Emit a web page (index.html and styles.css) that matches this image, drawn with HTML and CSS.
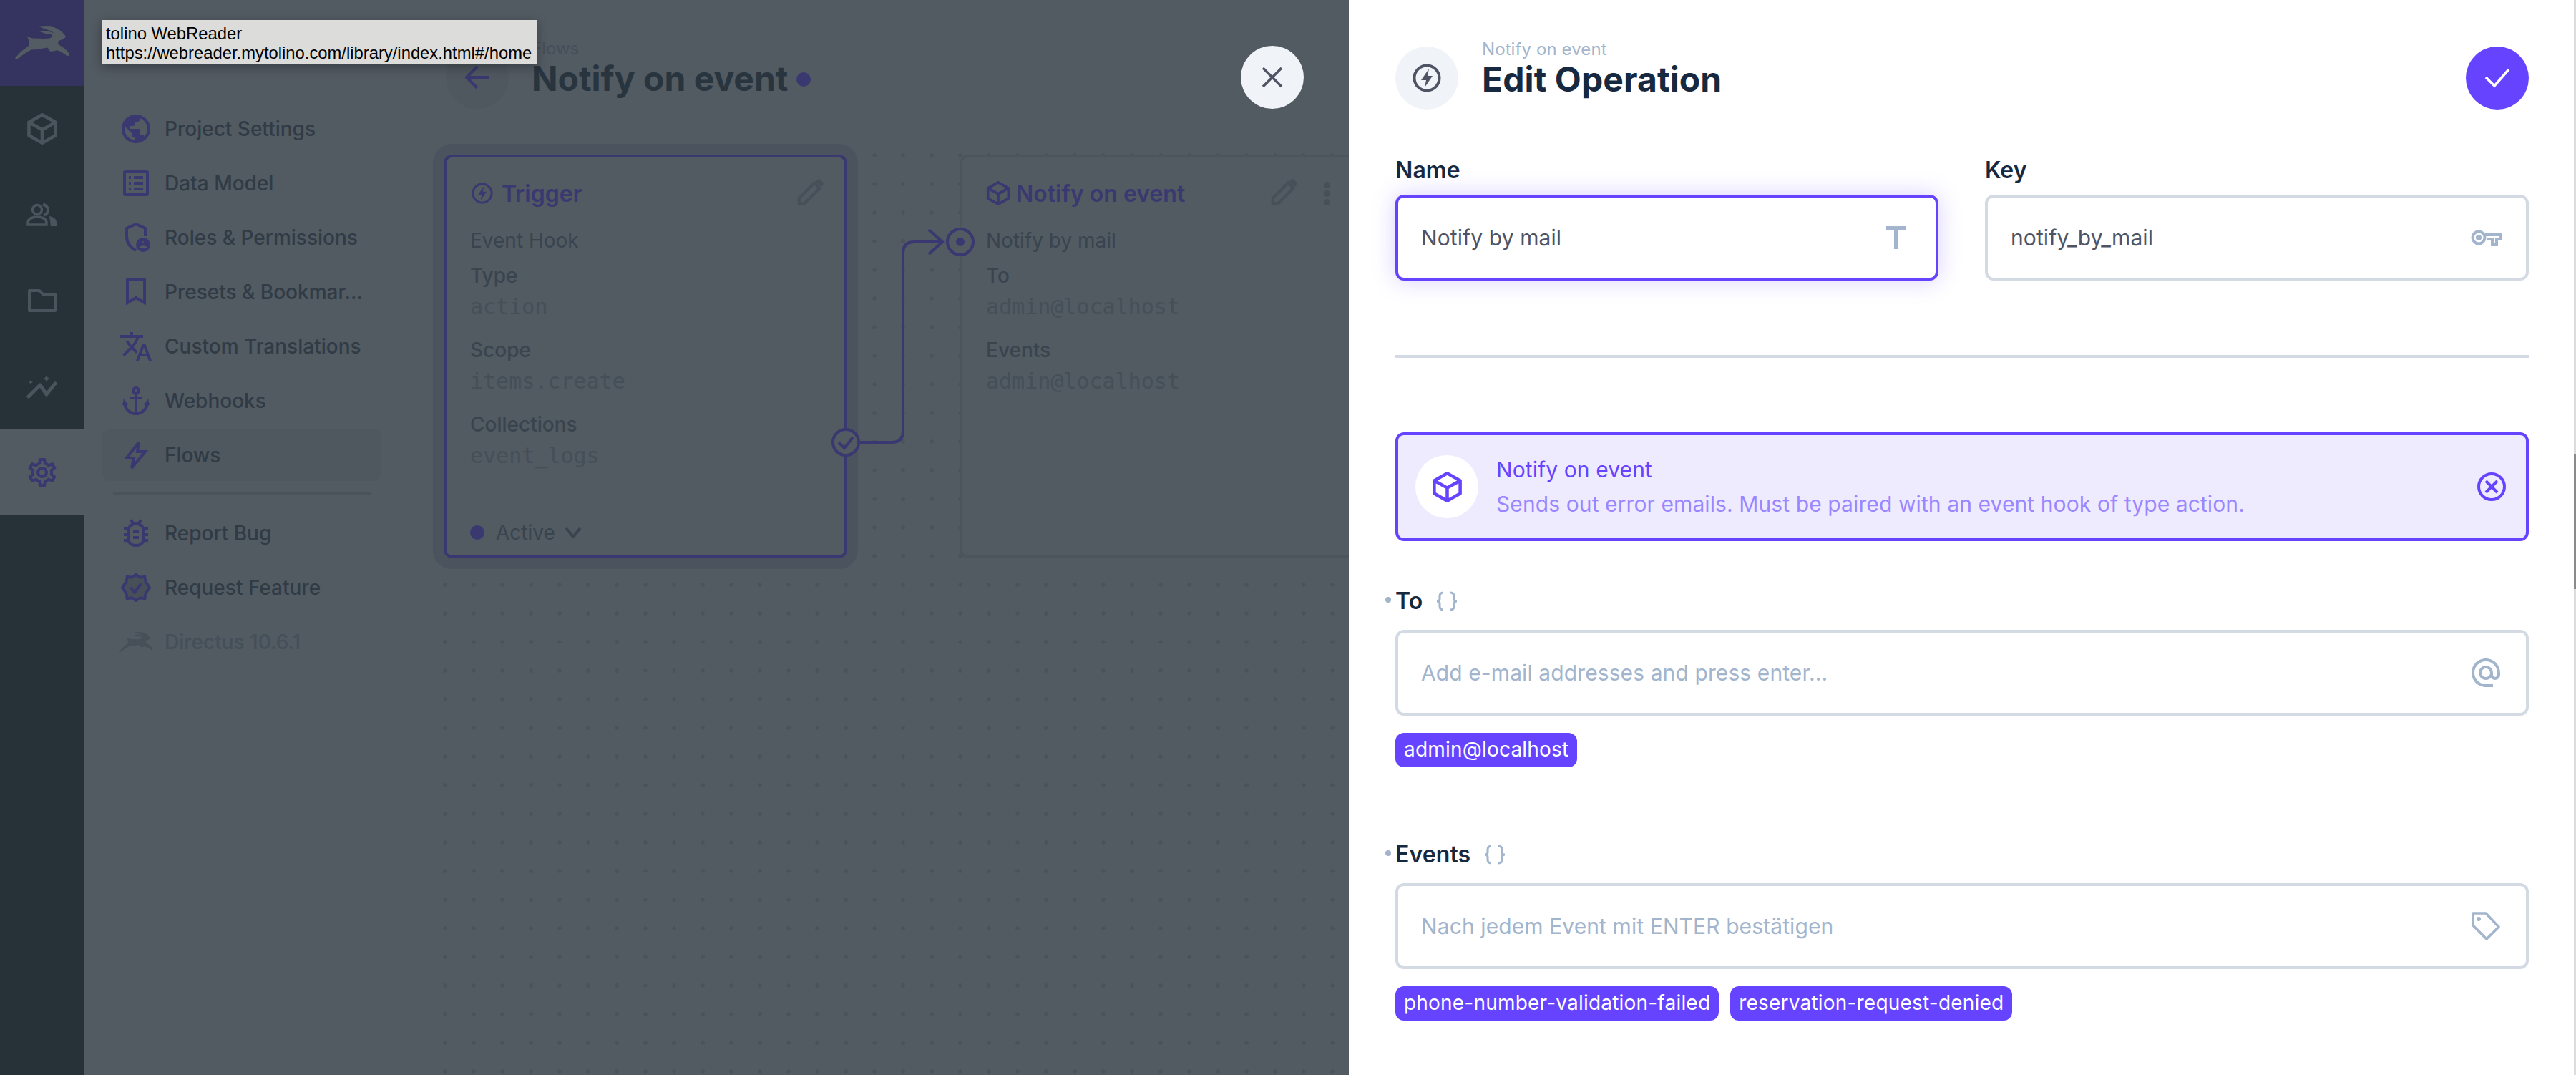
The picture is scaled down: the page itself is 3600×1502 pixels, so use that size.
FILE: index.html
```html
<!DOCTYPE html>
<html lang="en">
<head>
  <meta charset="UTF-8">
  <title>Directus - Notify on event</title>
  <link rel="stylesheet" href="styles.css">
</head>
<body>
  <svg class="sprites" width="0" height="0">
    <symbol id="rabbit" viewBox="50 45 245 150">
      <path d="M55 185Q75 160 92 148Q112 138 116 125Q118 112 105 90Q125 100 140 100Q180 102 205 100Q215 95 217 85Q190 82 160 70Q170 64 195 68Q212 72 222 78L212 68Q185 60 160 50Q200 45 225 52Q255 62 275 90Q275 102 245 110Q238 118 245 128Q275 145 290 165Q292 178 280 176Q255 155 235 152Q215 160 205 155Q200 145 195 140Q160 148 125 150Q95 165 62 192Q52 192 55 185Z"/>
    </symbol>
    <symbol id="bolt-circle" viewBox="0 0 40 40">
      <circle cx="20" cy="20" r="17.5" fill="none" stroke="currentColor" stroke-width="4"/>
      <path d="M23 7 12 23h7l-2 10 11-16h-7z" fill="currentColor"/>
    </symbol>
    <symbol id="cube" viewBox="2 1 36 38">
      <path d="M20 3 36 12v16L20 37 4 28V12zM4 12l16 9 16-9M20 21v16" fill="none" stroke="currentColor" stroke-width="4" stroke-linejoin="round"/>
    </symbol>
    <symbol id="pencil" viewBox="0 0 40 40">
      <path d="M3 37v-8L26 6l8 8-23 23z" fill="none" stroke="currentColor" stroke-width="4.500"/>
      <path d="M28 4l3-3c1-1 3-1 4 0l4 4c1 1 1 3 0 4l-3 3z" fill="currentColor"/>
    </symbol>
    <symbol id="braces" viewBox="0 0 32 28">
      <path d="M11 2C7 2 6 4 6 7v4c0 2-1 3-4 3 3 0 4 1 4 3v4c0 3 1 5 5 5M21 2c4 0 5 2 5 5v4c0 2 1 3 4 3-3 0-4 1-4 3v4c0 3-1 5-5 5" fill="none" stroke="currentColor" stroke-width="3"/>
    </symbol>
  </svg>

  <div class="app">
    <aside class="rail">
      <div class="rail-logo">
        <svg class="rabbit"><use href="#rabbit"/></svg>
      </div>
      <div class="rail-item">
        <svg class="rail-cube"><use href="#cube"/></svg>
      </div>
      <div class="rail-item">
        <svg class="rail-icon" viewBox="0 0 44 32" fill="none" stroke="currentColor" stroke-width="3.500">
          <circle cx="15" cy="9" r="6.500"/>
          <path d="M2 30v-3c0-5 6-8 13-8s13 3 13 8v3z"/>
          <path d="M23 1.500c4 1 7 4 7 8s-3 6.500-6 7.500" stroke-width="4"/>
          <path d="M32 18c6 1 10 4 10 9v5h-8" fill="currentColor" stroke="none"/>
        </svg>
      </div>
      <div class="rail-item">
        <svg class="rail-icon" viewBox="0 0 44 32" fill="none" stroke="currentColor" stroke-width="4">
          <path d="M4 2h14l5 5h17v23H4z" stroke-linejoin="round"/>
        </svg>
      </div>
      <div class="rail-item">
        <svg class="rail-icon tall" viewBox="0 0 44 33" fill="none" stroke="currentColor" stroke-width="5" stroke-linecap="round" stroke-linejoin="round">
          <path d="M3 30 19 14l9 13 12-15"/>
          <path d="M28 0l1.500 3.500L33 5l-3.500 1.500L28 10l-1.500-3.500L23 5l3.500-1.500zM6 7l1 2 2 1-2 1-1 2-1-2-2-1 2-1z" fill="currentColor" stroke="none"/>
        </svg>
      </div>
      <div class="rail-item active">
        <svg class="rail-gear" viewBox="2 2 20 20"><path fill="currentColor" d="M19.43 12.98c.04-.32.07-.64.07-.98 0-.34-.03-.66-.07-.98l2.11-1.650c.19-.15.24-.42.12-.64l-2-3.460c-.12-.22-.39-.3-.61-.22l-2.490 1c-.52-.4-1.080-.73-1.690-.98l-.38-2.650C14.460 2.180 14.250 2 14 2h-4c-.25 0-.46.18-.49.42l-.38 2.650c-.61.25-1.170.59-1.690.98l-2.490-1c-.23-.09-.49 0-.61.22l-2 3.460c-.13.22-.07.49.12.64l2.110 1.650c-.04.32-.07.65-.07.98 0 .33.03.66.07.98l-2.110 1.650c-.19.15-.24.42-.12.64l2 3.460c.12.22.39.3.61.22l2.490-1c.52.4 1.080.73 1.690.98l.38 2.650c.03.24.24.42.49.42h4c.25 0 .46-.18.49-.42l.38-2.650c.61-.25 1.170-.59 1.690-.98l2.490 1c.23.09.49 0 .61-.22l2-3.460c.12-.22.07-.49-.12-.64l-2.110-1.650zm-1.980-1.710c.04.31.05.52.05.73 0 .21-.02.43-.05.73l-.14 1.130.89.7 1.080.84-.7 1.210-1.270-.51-1.040-.42-.9.68c-.43.32-.84.56-1.250.73l-1.060.43-.16 1.130-.2 1.350h-1.400l-.19-1.350-.16-1.130-1.060-.43c-.43-.18-.83-.41-1.230-.71l-.91-.7-1.060.43-1.270.51-.7-1.210 1.080-.84.89-.7-.14-1.130c-.03-.31-.05-.54-.05-.74s.02-.43.05-.73l.14-1.130-.89-.7-1.080-.84.7-1.210 1.270.51 1.040.42.9-.68c.43-.32.84-.56 1.250-.73l1.060-.43.16-1.130.2-1.350h1.390l.19 1.350.16 1.130 1.060.43c.43.18.83.41 1.230.71l.91.7 1.060-.43 1.270-.51.7 1.210-1.070.85-.89.7.14 1.130zM12 8c-2.210 0-4 1.790-4 4s1.790 4 4 4 4-1.790 4-4-1.790-4-4-4zm0 6c-1.100 0-2-.9-2-2s.9-2 2-2 2 .9 2 2-.9 2-2 2z"/></svg>
      </div>
    </aside>

    <nav class="side">
      <a class="side-item">
        <svg class="side-icon" viewBox="2 2 20 20"><path fill="currentColor" d="M12 2C6.480 2 2 6.480 2 12s4.480 10 10 10 10-4.480 10-10S17.520 2 12 2zm-1 17.930c-3.950-.49-7-3.850-7-7.930 0-.62.08-1.210.21-1.790L9 15v1c0 1.100.9 2 2 2v1.930zm6.900-2.540c-.26-.81-1-1.390-1.900-1.390h-1v-3c0-.55-.45-1-1-1H8v-2h2c.55 0 1-.45 1-1V7h2c1.100 0 2-.9 2-2v-.41c2.930 1.190 5 4.060 5 7.410 0 2.080-.8 3.970-2.100 5.390z"/></svg>
        <span>Project Settings</span>
      </a>
      <a class="side-item">
        <svg class="side-icon" viewBox="0 0 40 40" fill="none" stroke="currentColor" stroke-width="4"><rect x="4" y="4" width="32" height="32" rx="1"/><path d="M17 12h13M17 20h13M17 28h13M10 12h3M10 20h3M10 28h3"/></svg>
        <span>Data Model</span>
      </a>
      <a class="side-item">
        <svg class="side-icon" viewBox="0 0 40 40" fill="none" stroke="currentColor" stroke-width="4"><path d="M20 1 7 7v11c0 9 5 16 13 20M33 18V7L20 1"/><circle cx="30" cy="30" r="10" fill="currentColor" stroke="none"/><circle cx="30" cy="26" r="3" fill="#525a62"/><path d="M24 35c1-5 11-5 12 0z" fill="#525a62" stroke="none"/></svg>
        <span>Roles &amp; Permissions</span>
      </a>
      <a class="side-item">
        <svg class="side-icon" viewBox="0 0 40 40" fill="none" stroke="currentColor" stroke-width="4"><path d="M8 3h24v32l-12-7-12 7z"/></svg>
        <span>Presets &amp; Bookmar...</span>
      </a>
      <a class="side-item">
        <svg class="side-icon wide" viewBox="1 2 22 20"><path fill="currentColor" d="M12.870 15.070l-2.540-2.510.03-.03c1.740-1.940 2.980-4.170 3.710-6.530H17V4h-7V2H8v2H1v1.990h11.170C11.500 7.920 10.440 9.750 9 11.350 8.070 10.320 7.300 9.190 6.690 8h-2c.73 1.630 1.730 3.170 2.980 4.560l-5.090 5.020L4 19l5-5 3.110 3.110.76-2.040zM18.500 10h-2L12 22h2l1.120-3h4.750L21 22h2l-4.500-12zm-2.620 7l1.620-4.330L19.120 17h-3.240z"/></svg>
        <span>Custom Translations</span>
      </a>
      <a class="side-item">
        <svg class="side-icon" viewBox="0 0 40 40" fill="none" stroke="currentColor" stroke-width="4"><circle cx="20" cy="6" r="4"/><path d="M20 10v28M12 16h16M4 21c0 10 7 17 16 17s16-7 16-17"/><path d="M3 17l6 9H1zM37 17l-6 9h8z" fill="currentColor" stroke="none"/></svg>
        <span>Webhooks</span>
      </a>
      <a class="side-item active">
        <svg class="side-icon" viewBox="0 0 40 40" fill="none" stroke="currentColor" stroke-width="4"><path d="M24 2 7 24h10l-3 14 19-23H22z" stroke-linejoin="miter"/></svg>
        <span>Flows</span>
      </a>
      <div class="side-divider"></div>
      <a class="side-item">
        <svg class="side-icon" viewBox="0 0 40 40" fill="none" stroke="currentColor" stroke-width="4"><rect x="9" y="7" width="22" height="30" rx="10"/><path d="M13 1l3 6M27 1l-3 6M3 14h6M3 22h6M3 30h6M31 14h6M31 22h6M31 30h6M16 18h8M16 26h8"/></svg>
        <span>Report Bug</span>
      </a>
      <a class="side-item">
        <svg class="side-icon wide" viewBox="0 0 44 42" fill="none" stroke="currentColor" stroke-width="4"><path d="M22 2l6 4 7-1 1 7 6 9-6 9-1 7-7-1-6 4-6-4-7 1-1-7-6-9 6-9 1-7 7 1z"/><path d="M14 21l6 7 10-13"/></svg>
        <span>Request Feature</span>
      </a>
      <a class="side-item version">
        <svg class="side-icon wide"><use href="#rabbit"/></svg>
        <span>Directus 10.6.1</span>
      </a>
    </nav>

    <main class="main">
      <header class="main-head">
        <div class="round-btn back">
          <svg viewBox="0 0 40 40" fill="none" stroke="currentColor" stroke-width="4"><path d="M36 20H6M20 5 5 20l15 15"/></svg>
        </div>
        <div class="titles">
          <div class="crumb">Flows</div>
          <h1>Notify on event <i class="dirty"></i></h1>
        </div>
      </header>

      <section class="canvas">
        <div class="node node-trigger">
          <div class="node-head">
            <svg class="node-icon"><use href="#bolt-circle"/></svg>
            <b>Trigger</b>
            <svg class="node-edit"><use href="#pencil"/></svg>
          </div>
          <div class="node-sub">Event Hook</div>
          <dl>
            <dt>Type</dt><dd>action</dd>
            <dt>Scope</dt><dd>items.create</dd>
            <dt>Collections</dt><dd>event_logs</dd>
          </dl>
          <div class="node-foot">
            <i class="dirty"></i><span>Active</span>
            <svg viewBox="0 0 24 16" fill="none" stroke="currentColor" stroke-width="4"><path d="M2 2l10 12L22 2"/></svg>
          </div>
        </div>

        <div class="node node-op">
          <div class="node-head">
            <svg class="node-icon"><use href="#cube"/></svg>
            <b>Notify on event</b>
            <svg class="node-edit"><use href="#pencil"/></svg>
            <span class="node-more"><i></i><i></i><i></i></span>
          </div>
          <div class="node-sub">Notify by mail</div>
          <dl>
            <dt>To</dt><dd>admin@localhost</dd>
            <dt>Events</dt><dd>admin@localhost</dd>
          </dl>
        </div>

        <svg class="wire" viewBox="0 0 200 320" fill="none" stroke="#3a3870" stroke-width="4">
          <path d="M30 300H76Q92 300 92 284V36Q92 20 108 20H147M128 3 147 20 128 37"/>
          <circle cx="12" cy="300" r="18" fill="#525a62"/>
          <path d="M2 300l8 8 12-15"/>
          <circle cx="172" cy="20" r="18" fill="#525a62"/>
          <circle cx="172" cy="20" r="6" fill="#3a3870" stroke="none"/>
        </svg>
      </section>

      <div class="round-btn close">
        <svg viewBox="0 0 40 40" fill="none" stroke="currentColor" stroke-width="3.500"><path d="M7 7l26 26M33 7 7 33"/></svg>
      </div>
    </main>

    <aside class="drawer">
      <header class="drawer-head">
        <div class="round-btn soft">
          <svg><use href="#bolt-circle"/></svg>
        </div>
        <div class="titles">
          <div class="crumb">Notify on event</div>
          <h1>Edit Operation</h1>
        </div>
        <div class="round-btn save">
          <svg viewBox="0 0 40 40" fill="none" stroke="currentColor" stroke-width="3.500"><path d="M4 19l12 12L36 8"/></svg>
        </div>
      </header>

      <div class="form-row">
        <div class="field">
          <label>Name</label>
          <div class="input focus">
            <span>Notify by mail</span>
            <svg class="t-icon" viewBox="0 0 30 34"><path fill="currentColor" d="M1 1h28v6H18v26h-6V7H1z"/></svg>
          </div>
        </div>
        <div class="field">
          <label>Key</label>
          <div class="input">
            <span>notify_by_mail</span>
            <svg class="key-icon" viewBox="0 0 44 24" fill="none" stroke="currentColor" stroke-width="4"><circle cx="11" cy="12" r="8.500"/><circle cx="11" cy="12" r="2" fill="currentColor"/><path d="M20 8h22v6H36v8h-6v-8h-8"/></svg>
          </div>
        </div>
      </div>

      <hr class="rule">

      <div class="picked">
        <div class="picked-icon"><svg><use href="#cube"/></svg></div>
        <div class="picked-text">
          <div class="picked-title">Notify on event</div>
          <div class="picked-desc">Sends out error emails. Must be paired with an event hook of type action.</div>
        </div>
        <svg class="picked-clear" viewBox="0 0 40 40" fill="none" stroke="currentColor" stroke-width="4"><circle cx="20" cy="20" r="18"/><path d="M12 12l16 16M28 12 12 28"/></svg>
      </div>

      <div class="field wide-field">
        <label class="required">To <svg class="braces"><use href="#braces"/></svg></label>
        <div class="input">
          <span class="placeholder">Add e-mail addresses and press enter...</span>
          <svg class="at-icon" viewBox="2 2 20 20"><path fill="currentColor" d="M12 2C6.480 2 2 6.480 2 12s4.480 10 10 10h5v-2h-5c-4.340 0-8-3.660-8-8s3.660-8 8-8 8 3.660 8 8v1.430c0 .79-.71 1.570-1.500 1.570s-1.500-.78-1.500-1.570V12c0-2.760-2.240-5-5-5s-5 2.240-5 5 2.240 5 5 5c1.380 0 2.640-.56 3.540-1.470.65.89 1.770 1.470 2.960 1.470 1.970 0 3.500-1.600 3.500-3.570V12c0-5.520-4.480-10-10-10zm0 13c-1.660 0-3-1.340-3-3s1.340-3 3-3 3 1.340 3 3-1.340 3-3 3z"/></svg>
        </div>
        <div class="chips">
          <span class="chip">admin@localhost</span>
        </div>
      </div>

      <div class="field wide-field events">
        <label class="required">Events <svg class="braces"><use href="#braces"/></svg></label>
        <div class="input">
          <span class="placeholder">Nach jedem Event mit ENTER bestätigen</span>
          <svg class="tag-icon" viewBox="0 0 40 40" fill="none" stroke="currentColor" stroke-width="3.500" stroke-linejoin="round"><path d="M2 2h18l18 19-17 17L2 19z"/><circle cx="10" cy="10" r="3" fill="currentColor" stroke="none"/></svg>
        </div>
        <div class="chips">
          <span class="chip">phone-number-validation-failed</span>
          <span class="chip">reservation-request-denied</span>
        </div>
      </div>
    </aside>
    <div class="scrollbar"><div class="thumb"></div></div>
  </div>

  <div class="tooltip">tolino WebReader<br>https://webreader.mytolino.com/library/index.html#/home</div>
</body>
</html>
```

FILE: styles.css
```css
* {
  box-sizing: border-box;
}
html, body {
  margin: 0;
  height: 100%;
}
body {
  font-family: Inter, "Liberation Sans", sans-serif;
  background: #525a62;
  overflow: hidden;
}
.sprites {
  position: absolute;
}
.app {
  display: flex;
  height: 1502px;
}

/* module rail */
.rail {
  width: 118px;
  flex: none;
  background: #263238;
  color: #4a545c;
}
.rail-logo {
  height: 120px;
  background: #353360;
  display: flex;
  align-items: center;
  justify-content: center;
}
.rabbit {
  width: 80px;
  height: 48px;
  fill: #535b63;
}
.rail-item {
  height: 120px;
  display: flex;
  align-items: center;
  justify-content: center;
}
.rail-item.active {
  background: #525a62;
  color: #3a3870;
}
.rail-cube {
  width: 42px;
  height: 44px;
}
.rail-icon {
  width: 44px;
  height: 32px;
}
.rail-icon.tall {
  height: 33px;
}
.rail-gear {
  width: 40px;
  height: 40px;
}

/* settings nav */
.side {
  width: 438px;
  flex: none;
  background: #525a62;
  padding: 144px 23px 0 24px;
  color: #303b45;
}
.side-item {
  display: flex;
  align-items: center;
  height: 72px;
  margin-bottom: 4px;
  padding-left: 28px;
  font-size: 28px;
  font-weight: 500;
  border-radius: 12px;
  white-space: nowrap;
}
.side-item span {
  margin-left: 20px;
}
.side-icon {
  width: 40px;
  height: 40px;
  flex: none;
  color: #3a3870;
}
.side-icon.wide {
  width: 48px;
  margin-left: -4px;
  margin-right: -4px;
  fill: #474f59;
}
.side-item.active {
  background: #4f575f;
}
.side-divider {
  height: 4px;
  margin: 16px 15px 17px 16px;
  background: #4a525a;
}
.version {
  color: #454f59;
}

/* main area */
.main {
  flex: 1;
  position: relative;
  background: #525a62;
}
.main-head {
  display: flex;
  height: 200px;
  padding: 64px 0 0 67px;
}
.round-btn {
  width: 88px;
  height: 88px;
  flex: none;
  border-radius: 50%;
  background: #4f575f;
  color: #3a3870;
  display: flex;
  align-items: center;
  justify-content: center;
}
.round-btn svg {
  width: 40px;
  height: 40px;
}
.titles {
  margin-left: 33px;
}
.main-head .titles {
  margin-left: 32px;
}
.crumb {
  font-size: 24px;
  line-height: 28px;
  margin-top: -10px;
  color: #454f59;
}
.titles h1 {
  margin: -4px 0 0;
  font-size: 48px;
  line-height: 64px;
  font-weight: 700;
  color: #28343e;
  white-space: nowrap;
}
.dirty {
  display: inline-block;
  width: 20px;
  height: 20px;
  border-radius: 50%;
  background: #3a3870;
  vertical-align: 6px;
}
.close {
  position: absolute;
  top: 64px;
  left: 1178px;
  background: #f0f4f9;
  color: #4f5464;
}

/* flow canvas */
.canvas {
  position: absolute;
  left: 44px;
  top: 200px;
  right: 0;
  bottom: 0;
  overflow: hidden;
  background-image: radial-gradient(circle, #4a525a 2.5px, transparent 3px);
  background-size: 40px 40px;
  background-position: 2px -3px;
}
.node {
  position: absolute;
  top: 16px;
  width: 564px;
  height: 564px;
  padding: 30px 32px 0 33px;
  background: #525a62;
  border: 4px solid #4c545c;
  border-radius: 12px;
  color: #39444e;
}
.node-trigger {
  left: 20px;
  border-color: #3a3870;
  box-shadow: 0 0 0 15px #4b535e;
}
.node-op {
  left: 741px;
}
.node-head {
  display: flex;
  align-items: center;
  height: 40px;
  color: #3a3870;
  font-size: 32px;
}
.node-head b {
  font-weight: 600;
  margin-left: 10px;
  flex: 1;
  white-space: nowrap;
}
.node-icon {
  width: 34px;
  height: 34px;
  margin-right: -2px;
}
.node-trigger .node-icon {
  width: 30px;
  height: 30px;
  margin: 0 2px;
}
.node-edit {
  width: 37px;
  height: 37px;
  color: #474f59;
  margin-top: -4px;
}
.node-trigger .node-edit {
  margin-right: -3px;
}
.node-more {
  display: flex;
  flex-direction: column;
  gap: 3px;
  margin: 0 10px 0 37px;
}
.node-more i {
  width: 9px;
  height: 9px;
  border-radius: 50%;
  background: #474f59;
}
.node-sub {
  font-size: 28px;
  line-height: 40px;
  margin-top: 26px;
}
.node dl {
  margin: 9px 0 0;
  font-size: 28px;
}
.node dt {
  font-weight: 500;
  line-height: 40px;
}
.node dd {
  margin: 0 0 16px;
  font-family: "DejaVu Sans Mono", monospace;
  font-size: 30px;
  line-height: 48px;
  color: #454f58;
}
.node-foot {
  position: absolute;
  left: 33px;
  right: 33px;
  bottom: 8px;
  display: flex;
  align-items: center;
  height: 48px;
  font-size: 28px;
}
.node-foot span {
  margin-left: 16px;
}
.node-foot svg {
  width: 24px;
  height: 16px;
  margin-left: 13px;
}
.wire {
  position: absolute;
  left: 570px;
  top: 118px;
  width: 200px;
  height: 320px;
  overflow: visible;
}

/* edit drawer */
.drawer {
  width: 1715px;
  flex: none;
  background: #fff;
  padding: 65px 66px 0 65px;
  color: #172940;
  letter-spacing: 0.1px;
}
.drawer-head {
  display: flex;
  height: 88px;
}
.drawer-head .titles {
  flex: 1;
}
.drawer-head .crumb {
  color: #a2b5cd;
}
.drawer-head h1 {
  color: #172940;
}
.soft {
  background: #f0f4f9;
  color: #4f5464;
}
.save {
  background: #6644ff;
  color: #fff;
}
.form-row {
  display: grid;
  grid-template-columns: 759px 760px;
  gap: 65px;
  margin-top: 64px;
}
label {
  display: block;
  height: 56px;
  line-height: 44px;
  font-size: 32px;
  font-weight: 600;
  margin-top: -1px;
}
.input {
  height: 120px;
  border: 4px solid #d3dae4;
  border-radius: 12px;
  padding: 0 32px;
  display: flex;
  align-items: center;
  justify-content: space-between;
  font-size: 30px;
  color: #4f5464;
  background: #fff;
}
.input svg {
  color: #a2b5cd;
  flex: none;
}
.input.focus {
  border-color: #6644ff;
  box-shadow: 0 0 32px rgba(102, 68, 255, 0.25);
}
.t-icon {
  width: 30px;
  height: 34px;
  margin-right: 8px;
}
.key-icon {
  width: 44px;
  height: 24px;
  margin-right: 1px;
}
.at-icon {
  width: 40px;
  height: 40px;
  margin-right: 4px;
}
.tag-icon {
  width: 40px;
  height: 40px;
  margin-right: 4px;
}
.placeholder {
  color: #a2b5cd;
}
.rule {
  height: 4px;
  margin: 104px 0 104px;
  border: 0;
  background: #d3dae4;
}
.picked {
  display: flex;
  align-items: center;
  height: 152px;
  padding: 0 28px 0 24px;
  background: #efebff;
  border: 4px solid #6644ff;
  border-radius: 12px;
  color: #6644ff;
}
.picked-icon {
  width: 88px;
  height: 88px;
  flex: none;
  border-radius: 50%;
  background: #fff;
  display: flex;
  align-items: center;
  justify-content: center;
}
.picked-icon svg {
  width: 41px;
  height: 43px;
}
.picked-text {
  flex: 1;
  margin-left: 25px;
  font-size: 30px;
}
.picked-title {
  line-height: 48px;
}
.picked-desc {
  line-height: 48px;
  color: #9a86ff;
}
.picked-clear {
  width: 40px;
  height: 40px;
}
.wide-field {
  margin-top: 56px;
}
.events {
  margin-top: 94px;
}
.required {
  position: relative;
  height: 68px;
  line-height: 56px;
  margin: 0;
}
.required::before {
  content: "";
  position: absolute;
  left: -14px;
  top: 22px;
  width: 8px;
  height: 8px;
  border-radius: 50%;
  background: #a2b5cd;
}
.braces {
  width: 32px;
  height: 28px;
  margin-left: 10px;
  vertical-align: -3px;
  color: #a2b5cd;
}
.chips {
  display: flex;
  gap: 16px;
  margin-top: 24px;
}
.chip {
  height: 48px;
  line-height: 46px;
  padding: 0 12px;
  background: #6644ff;
  color: #fff;
  font-size: 28px;
  letter-spacing: 0.2px;
  border-radius: 12px;
}

/* scrollbar + native tooltip */
.scrollbar {
  position: absolute;
  left: 3597px;
  top: 0;
  width: 3px;
  height: 1502px;
  background: #dcdcdc;
}
.thumb {
  margin-top: 635px;
  height: 188px;
  background: #8a8a8a;
}
.tooltip {
  position: absolute;
  left: 142px;
  top: 28px;
  width: 608px;
  height: 62px;
  padding: 5px 6px 0;
  background: #dcdcda;
  color: #000;
  font-family: "Liberation Sans", sans-serif;
  font-size: 23.8px;
  line-height: 27px;
  white-space: nowrap;
  box-shadow: 0 4px 14px rgba(0, 0, 0, 0.3);
}
```
